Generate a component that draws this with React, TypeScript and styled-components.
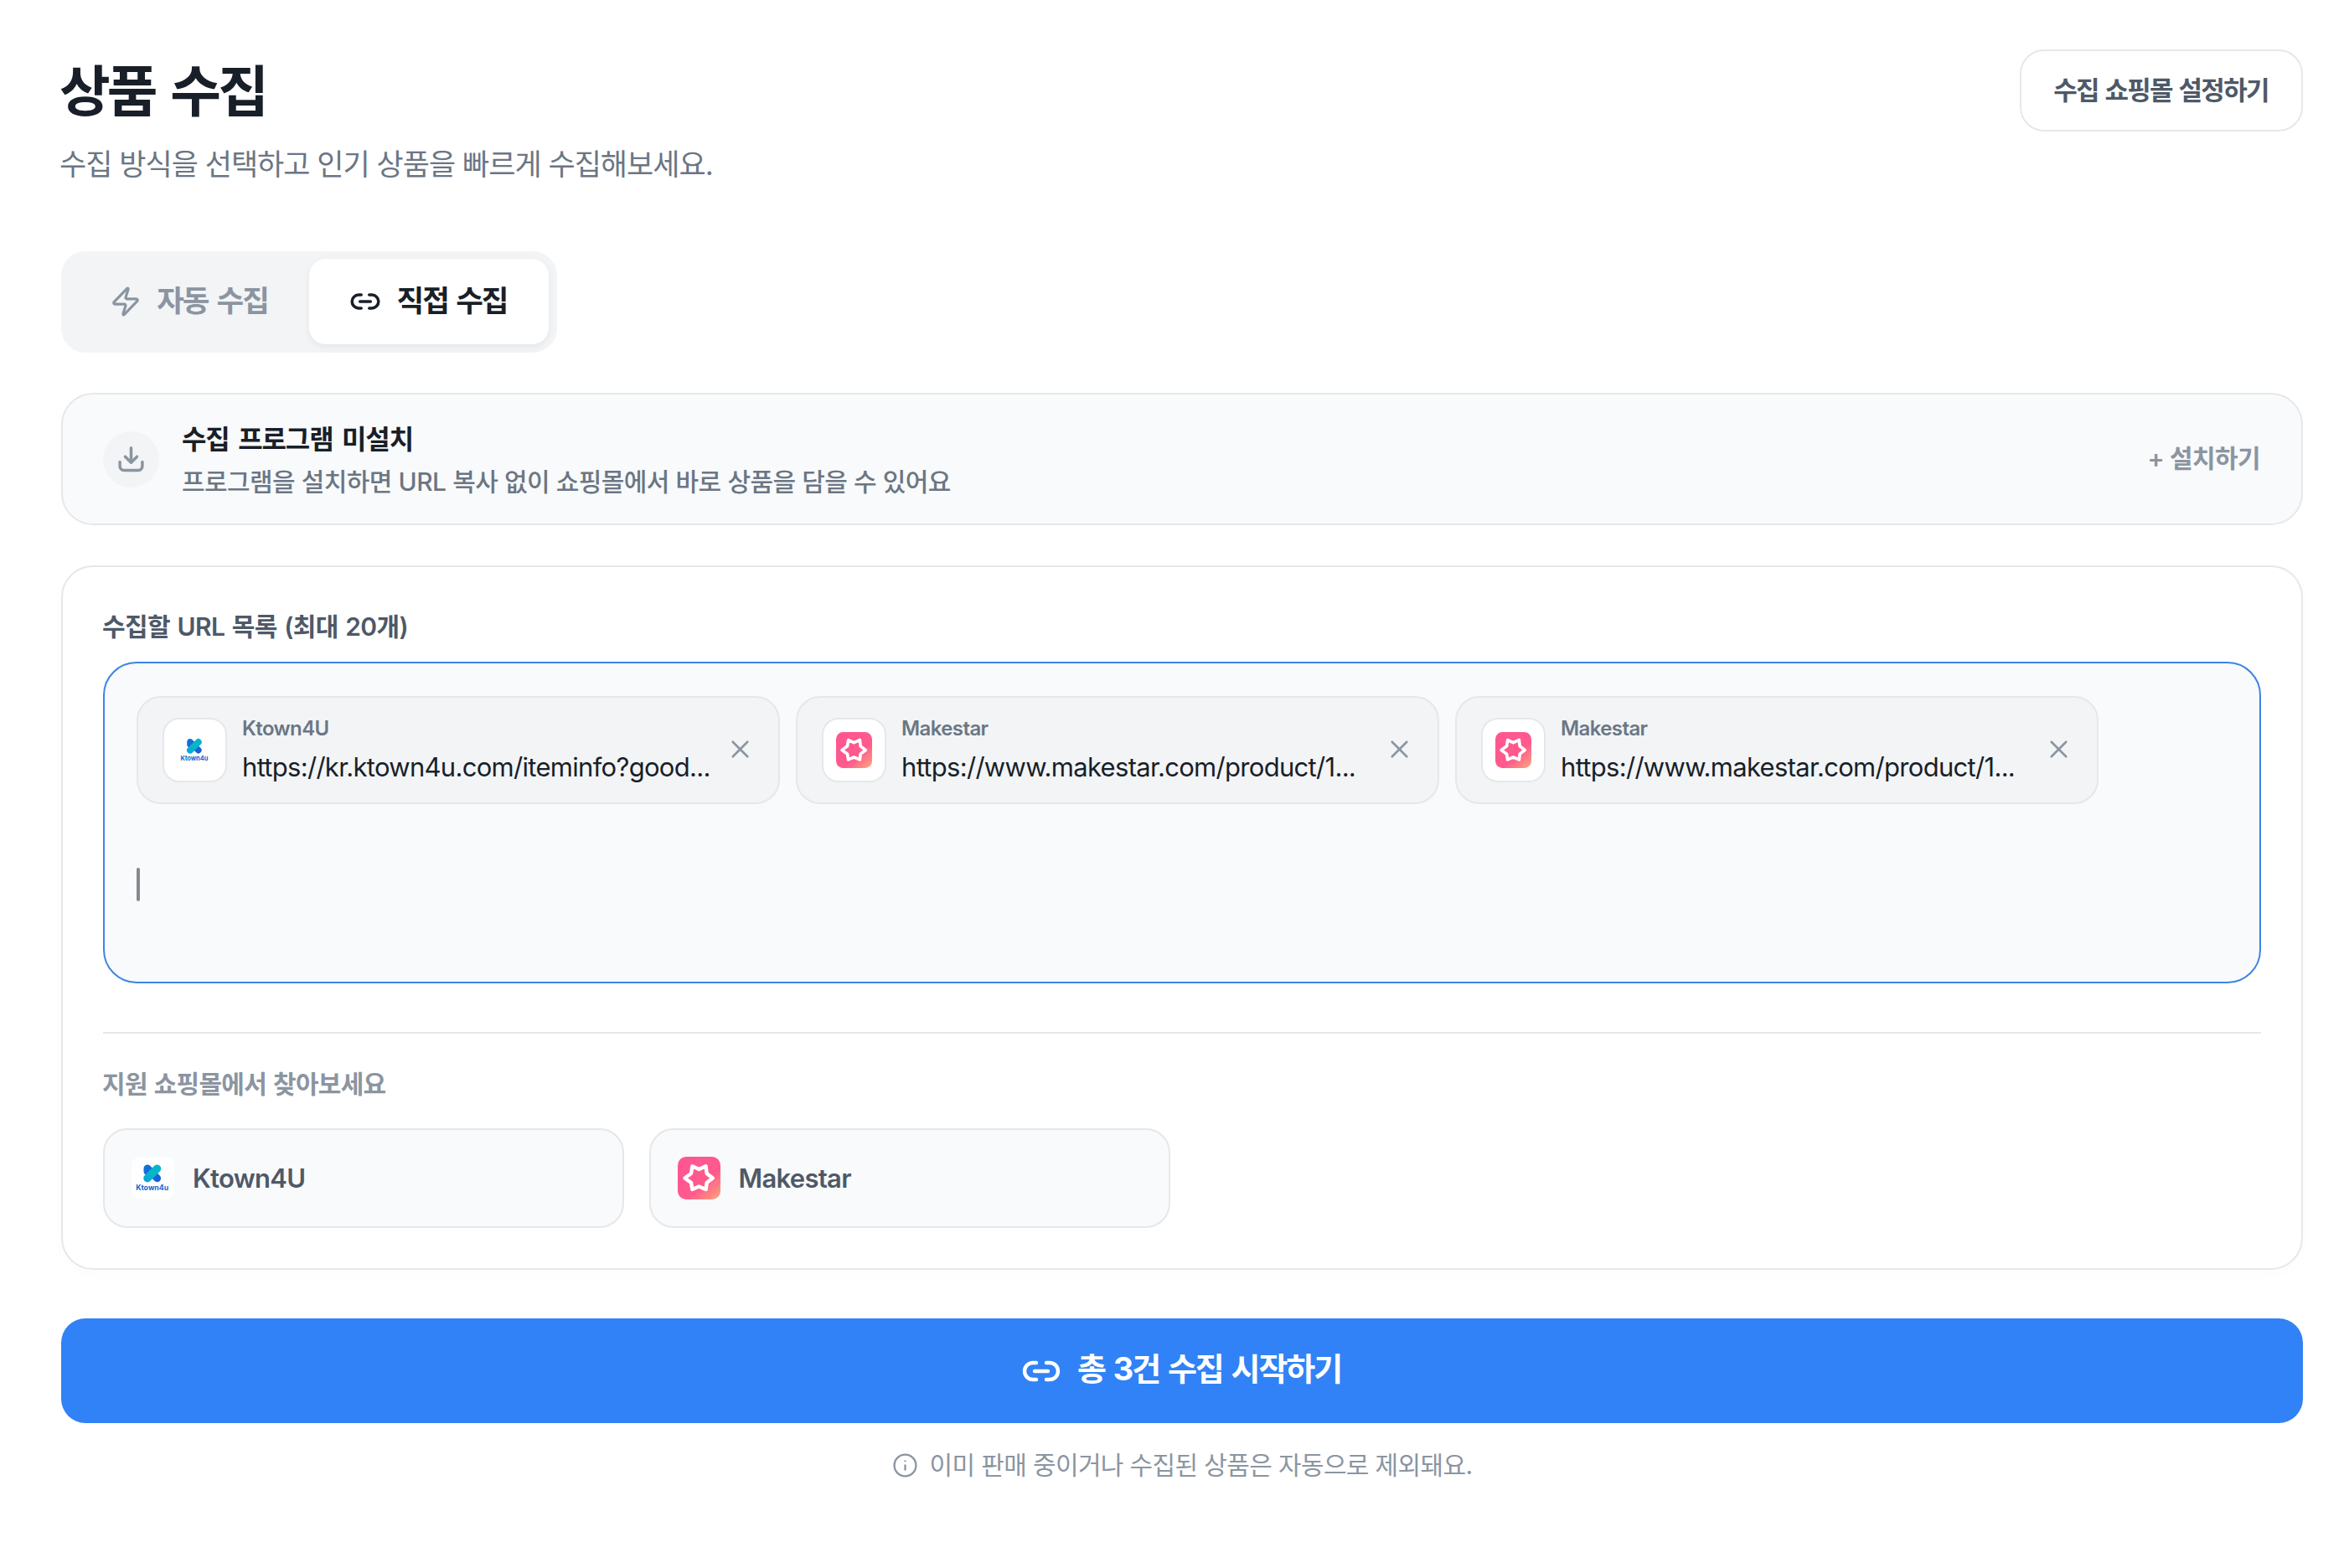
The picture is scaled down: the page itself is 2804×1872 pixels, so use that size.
import React from "react";
import styled, { createGlobalStyle, css } from "styled-components";
import { Info, Link2, X, Zap } from "lucide-react";

const color = {
  ink: "#191f28",
  strong: "#4e5968",
  sub: "#6b7684",
  muted: "#8b95a1",
  line: "#e5e8eb",
  fill: "#f2f4f6",
  soft: "#f9fafb",
  blue: "#3182f6",
  focus: "#3b84e6",
};

const GlobalStyle = createGlobalStyle`
  *, *::before, *::after { box-sizing: border-box; }
  html, body { margin: 0; background: #fff; }
  body, button {
    font-family: Inter, "Noto Sans CJK KR", "Noto Sans", sans-serif;
    -webkit-font-smoothing: antialiased;
  }
  h1, h2, p { margin: 0; }
  svg { display: block; flex: none; }
`;

interface TextProps {
  $size: number;
  $line?: number;
  $weight?: number;
  $color?: string;
  $track?: number;
  $word?: number;
}

const textStyle = css<TextProps>`
  font-size: ${(p) => p.$size}px;
  line-height: ${(p) => p.$line ?? 40}px;
  font-weight: ${(p) => p.$weight ?? 400};
  color: ${(p) => p.$color ?? color.ink};
  letter-spacing: ${(p) => p.$track ?? 0}px;
  word-spacing: ${(p) => p.$word ?? 0}px;
  white-space: nowrap;
`;

const Text = styled.p<TextProps>`
  ${textStyle}
`;

const Page = styled.main`
  display: flex;
  flex-direction: column;
  min-height: 1872px;
  padding: 59px 55px 0 73px;
`;

const Header = styled.header`
  display: flex;
  justify-content: space-between;
  align-items: flex-start;
  margin-bottom: 79px;
`;

const Heading = styled.div`
  display: flex;
  flex-direction: column;
  gap: 17px;
  margin-left: -2px;
  padding-top: 5px;
`;

const Title = styled.h1<TextProps>`
  ${textStyle}
`;

const buttonReset = css`
  display: flex;
  align-items: center;
  justify-content: center;
  margin: 0;
  padding: 0;
  border: 0;
  background: none;
  cursor: pointer;
`;

const SettingsButton = styled.button`
  ${buttonReset}
  width: 338px;
  height: 98px;
  padding-right: 1px;
  border: 2px solid ${color.line};
  border-radius: 29px;
  background: #fff;
`;

const Tabs = styled.div`
  display: flex;
  align-self: flex-start;
  height: 121px;
  padding: 9px 10px 10px;
  border-radius: 29px;
  background: ${color.fill};
`;

const Tab = styled.button<{ $active?: boolean }>`
  ${buttonReset}
  gap: 18px;
  width: 286px;
  padding-right: 1px;
  border-radius: 20px;
  color: ${(p) => (p.$active ? color.ink : color.muted)};
  ${(p) =>
    p.$active &&
    css`
      background: #fff;
      box-shadow: 0 3px 10px rgba(0, 0, 0, 0.06);
    `}
`;

const Banner = styled.section`
  display: flex;
  align-items: center;
  gap: 27px;
  height: 158px;
  margin-top: 48px;
  padding: 0 49px 0 48px;
  border: 2px solid ${color.line};
  border-radius: 38px;
  background: ${color.soft};
`;

const RoundIcon = styled.div`
  display: grid;
  place-items: center;
  width: 67px;
  height: 67px;
  border-radius: 50%;
  background: ${color.fill};
  color: ${color.muted};
`;

const BannerText = styled.div`
  display: flex;
  flex: 1;
  flex-direction: column;
  gap: 6px;
  padding-top: 3px;
`;

const InstallButton = styled.button`
  ${buttonReset}
  padding-bottom: 2px;
`;

const Card = styled.section`
  display: flex;
  flex-direction: column;
  height: 841px;
  margin-top: 48px;
  padding: 51px 48px 0 48px;
  border: 2px solid ${color.line};
  border-radius: 38px;
  background: #fff;
  box-shadow: 0 4px 20px rgba(0, 0, 0, 0.015);
`;

const SectionLabel = styled(Text)`
  margin-left: -1px;
`;

const UrlBox = styled.div`
  height: 384px;
  margin-top: 22px;
  padding: 39px 38px;
  border: 2px solid ${color.focus};
  border-radius: 40px;
  background: ${color.soft};
`;

const ChipRow = styled.div`
  display: flex;
  gap: 19px;
`;

const Chip = styled.div`
  display: flex;
  align-items: center;
  width: 768px;
  height: 129px;
  padding: 0 28px 0 29px;
  border: 2px solid ${color.line};
  border-radius: 29px;
  background: ${color.fill};
`;

const Thumb = styled.div`
  display: grid;
  place-items: center;
  flex: none;
  width: 77px;
  height: 77px;
  border: 2px solid ${color.line};
  border-radius: 20px;
  background: #fff;
`;

const ChipBody = styled.div`
  display: flex;
  flex: 1;
  flex-direction: column;
  gap: 6px;
  min-width: 0;
  margin-left: 18px;
  padding-bottom: 5px;
`;

const RemoveButton = styled.button`
  ${buttonReset}
  width: 36px;
  height: 38px;
  padding-bottom: 2px;
  color: ${color.muted};
`;

const Caret = styled.div`
  width: 4px;
  height: 40px;
  margin-top: 76px;
  border-radius: 2px;
  background: #85898f;
`;

const Divider = styled.hr`
  flex: none;
  width: 100%;
  height: 2px;
  margin: 58px 0 40px;
  border: 0;
  background: ${color.line};
`;

const MallRow = styled.div`
  display: flex;
  gap: 29.5px;
  margin-top: 33px;
`;

const MallButton = styled.button`
  ${buttonReset}
  justify-content: flex-start;
  gap: 22px;
  width: 622px;
  height: 119px;
  padding-left: 32px;
  border: 2px solid ${color.line};
  border-radius: 29px;
  background: ${color.soft};
`;

const SubmitButton = styled.button`
  ${buttonReset}
  gap: 19px;
  height: 125px;
  margin-top: 58px;
  padding-right: 2px;
  border-radius: 29px;
  background: ${color.blue};
  color: #fff;
`;

const SubmitLabel = styled(Text)`
  padding-bottom: 5px;
`;

const Notice = styled.div`
  display: flex;
  align-items: center;
  justify-content: center;
  gap: 14px;
  margin-top: 30px;
  color: ${color.muted};
`;

const DownloadIcon = () => (
  <svg width="34" height="34" viewBox="0 0 34 34" fill="none" stroke="currentColor" strokeWidth="3.5" strokeLinecap="round" strokeLinejoin="round">
    <path d="M16.500 3.8V21M9.500 14.200l7 7 7-7" />
    <path d="M3.100 20.500v5.300a4.600 4.600 0 0 0 4.600 4.600h17.600a4.600 4.600 0 0 0 4.600-4.600v-5.300" />
  </svg>
);

const KtownLogo = ({ size }: { size: number }) => (
  <svg width={size} height={size} viewBox="0 0 51 51">
    <defs>
      <linearGradient id="ktownFront" gradientUnits="userSpaceOnUse" x1="15" y1="30" x2="35" y2="10">
        <stop offset="0" stopColor="#0a9fe0" />
        <stop offset="0.5" stopColor="#06b9c4" />
        <stop offset="1" stopColor="#08b0d0" />
      </linearGradient>
      <linearGradient id="ktownBack" gradientUnits="userSpaceOnUse" x1="15" y1="10" x2="35" y2="30">
        <stop offset="0" stopColor="#1273d8" />
        <stop offset="1" stopColor="#1b5bdc" />
      </linearGradient>
    </defs>
    <rect width="51" height="51" rx="10" fill="#fff" />
    <g strokeLinecap="round" strokeLinejoin="round" fill="none">
      <path d="M19 17.500V14L30.600 25.700" stroke="url(#ktownBack)" strokeWidth="9" />
      <path d="M19 25.700 30.600 14.200" stroke="url(#ktownFront)" strokeWidth="9.400" />
    </g>
    <text x="24.700" y="40" textAnchor="middle" textLength="39" lengthAdjust="spacingAndGlyphs" fontFamily="Inter, sans-serif" fontSize="9" fontWeight="700" fill="#1565d0">
      Ktown4u
    </text>
  </svg>
);

const MakestarLogo = ({ size }: { size: number }) => (
  <svg width={size} height={size} viewBox="0 0 51 51">
    <defs>
      <linearGradient id="makestarFill" x1="0.2" y1="0.1" x2="1" y2="1">
        <stop offset="0" stopColor="#ff5692" />
        <stop offset="0.55" stopColor="#ff5a8c" />
        <stop offset="1" stopColor="#ffa67c" />
      </linearGradient>
    </defs>
    <rect width="51" height="51" rx="10" fill="url(#makestarFill)" />
    <path
      d="M17.400 11.300 25.300 15 33.600 11.300 34.700 20 41.800 25.500 34.700 31 33.600 39 25.300 35.500 17.400 39 16 31 8.500 25.500 16 20z"
      fill="none"
      stroke="#fff"
      strokeWidth="4.400"
      strokeLinejoin="round"
    />
  </svg>
);

const logos = { Ktown4U: KtownLogo, Makestar: MakestarLogo };
type Mall = keyof typeof logos;

const malls: Mall[] = ["Ktown4U", "Makestar"];

const urls: { mall: Mall; url: string }[] = [
  { mall: "Ktown4U", url: "https://kr.ktown4u.com/iteminfo?good..." },
  { mall: "Makestar", url: "https://www.makestar.com/product/1..." },
  { mall: "Makestar", url: "https://www.makestar.com/product/1..." },
];

const UrlChip = ({ mall, url }: { mall: Mall; url: string }) => {
  const Logo = logos[mall];
  return (
    <Chip>
      <Thumb>
        <Logo size={43} />
      </Thumb>
      <ChipBody>
        <Text $size={24} $weight={600} $color={color.sub} $track={-0.6}>{mall}</Text>
        <Text $size={31} $track={-0.7}>{url}</Text>
      </ChipBody>
      <RemoveButton aria-label="삭제">
        <X size={35} strokeWidth={1.8} />
      </RemoveButton>
    </Chip>
  );
};

export default function App() {
  return (
    <>
      <GlobalStyle />
      <Page>
        <Header>
          <Heading>
            <Title $size={66} $line={90} $weight={700} $track={-3.9} $word={7}>상품 수집</Title>
            <Text $size={35} $line={50} $color={color.sub} $track={-1}>
              수집 방식을 선택하고 인기 상품을 빠르게 수집해보세요.
            </Text>
          </Heading>
          <SettingsButton>
            <Text $size={31} $weight={600} $color={color.strong} $track={-1.7} $word={1.5}>수집 쇼핑몰 설정하기</Text>
          </SettingsButton>
        </Header>

        <Tabs>
          <Tab>
            <Zap size={38} strokeWidth={2} />
            <Text $size={35.5} $weight={600} $color={color.muted} $track={-2} $word={3}>자동 수집</Text>
          </Tab>
          <Tab $active>
            <Link2 size={38} strokeWidth={2.2} />
            <Text $size={35.5} $weight={700} $track={-2} $word={3}>직접 수집</Text>
          </Tab>
        </Tabs>

        <Banner>
          <RoundIcon>
            <DownloadIcon />
          </RoundIcon>
          <BannerText>
            <Text $size={32} $line={44} $weight={700} $track={-1.1} $word={4}>수집 프로그램 미설치</Text>
            <Text $size={30} $line={44} $weight={500} $color={color.sub} $track={-0.6} $word={0.4}>
              프로그램을 설치하면 URL 복사 없이 쇼핑몰에서 바로 상품을 담을 수 있어요
            </Text>
          </BannerText>
          <InstallButton>
            <Text $size={30} $weight={600} $color={color.muted} $track={-0.6}>+ 설치하기</Text>
          </InstallButton>
        </Banner>

        <Card>
          <SectionLabel $size={30} $weight={600} $color={color.strong} $track={-0.55} $word={1.3}>수집할 URL 목록 (최대 20개)</SectionLabel>
          <UrlBox>
            <ChipRow>
              {urls.map((item, i) => (
                <UrlChip key={i} {...item} />
              ))}
            </ChipRow>
            <Caret />
          </UrlBox>
          <Divider />
          <SectionLabel $size={30} $weight={600} $color={color.muted} $track={-0.7} $word={1}>지원 쇼핑몰에서 찾아보세요</SectionLabel>
          <MallRow>
            {malls.map((mall) => {
              const Logo = logos[mall];
              return (
                <MallButton key={mall}>
                  <Logo size={51} />
                  <Text $size={31} $weight={600} $color={color.strong} $track={-0.7}>{mall}</Text>
                </MallButton>
              );
            })}
          </MallRow>
        </Card>

        <SubmitButton>
          <Link2 size={48} strokeWidth={2.2} />
          <SubmitLabel $size={38} $weight={700} $color="#fff" $track={-2.1} $word={3}>총 3건 수집 시작하기</SubmitLabel>
        </SubmitButton>
        <Notice>
          <Info size={31} strokeWidth={1.8} />
          <Text $size={30} $color={color.muted} $track={-0.64}>이미 판매 중이거나 수집된 상품은 자동으로 제외돼요.</Text>
        </Notice>
      </Page>
    </>
  );
}
